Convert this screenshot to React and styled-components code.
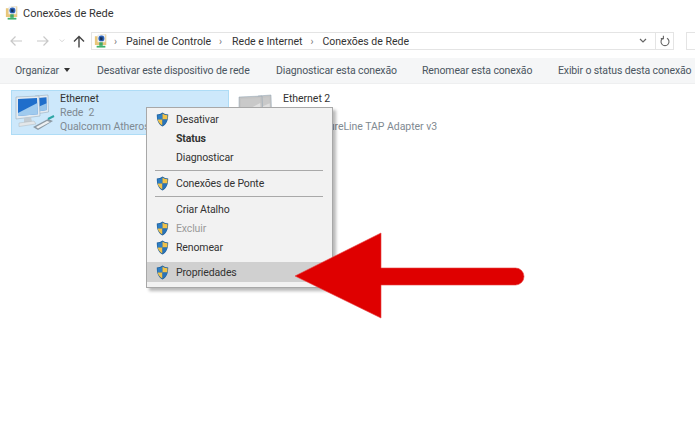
import React from "react";
import styled, { createGlobalStyle } from "styled-components";

const GlobalStyle = createGlobalStyle`
  html, body {
    margin: 0;
    background: #ffffff;
  }
  body {
    font-family: Roboto, "Open Sans", sans-serif;
    font-size: 10.5px;
    letter-spacing: -0.13px;
    color: #3a3a3a;
  }
`;

const Window = styled.div`
  position: relative;
  width: 695px;
  height: 425px;
  overflow: hidden;
  background: #ffffff;
`;

const TitleBar = styled.div`
  display: flex;
  align-items: center;
  gap: 4px;
  height: 26px;
  padding-left: 5px;
  font-size: 11px;
  letter-spacing: 0;
  color: #333;
`;

const NavBar = styled.div`
  display: flex;
  align-items: center;
  height: 30px;
  margin-bottom: 2px;
  padding-left: 9px;
`;

const NavButton = styled.div`
  display: flex;
  flex: none;
  width: ${(p) => p.$w}px;
  color: ${(p) => p.$color};
`;

const AddressBox = styled.div`
  display: flex;
  flex: none;
  align-items: center;
  width: 583px;
  height: 18px;
  box-sizing: border-box;
  border: 1px solid #e4e4e4;
  padding-left: 2px;
  font-size: 10.5px;
  letter-spacing: 0;
  color: #333;
`;

const Crumb = styled.span`
  margin-left: ${(p) => p.$gap}px;
`;

const Chevron = styled.span`
  margin-left: ${(p) => p.$gap}px;
  color: #777;
  font-size: 10px;
`;

const AddressEnd = styled.div`
  margin-left: auto;
  display: flex;
  align-items: center;
  height: 100%;
`;

const RefreshCell = styled.div`
  display: flex;
  align-items: center;
  justify-content: center;
  width: 17px;
  height: 100%;
  border-left: 1px solid #e4e4e4;
`;

const DropCell = styled.div`
  display: flex;
  width: 16px;
`;

const SearchBox = styled.div`
  flex: none;
  width: 30px;
  height: 18px;
  margin-left: 12px;
  box-sizing: border-box;
  border: 1px solid #e4e4e4;
`;

const Toolbar = styled.div`
  display: flex;
  align-items: center;
  height: 25px;
  padding-left: 15px;
  background: #f5f6f7;
  border-bottom: 1px solid #eeeff0;
  color: #4a5560;
`;

const ToolItem = styled.span`
  flex: none;
  white-space: nowrap;
  width: ${(p) => p.$w}px;
`;

const ToolCaret = styled.span`
  display: inline-block;
  margin-left: 5px;
  vertical-align: 2px;
  border-left: 3.5px solid transparent;
  border-right: 3.5px solid transparent;
  border-top: 4px solid #333;
`;

const FileList = styled.div`
  display: flex;
  gap: 5px;
  padding: 6px 0 0 11px;
`;

const Connection = styled.div`
  display: flex;
  align-items: center;
  box-sizing: border-box;
  width: ${(p) => p.$w}px;
  height: 45px;
  padding-left: 3px;
  background: ${(p) => (p.$selected ? "#cde8fb" : "transparent")};
  border: 1px solid ${(p) => (p.$selected ? "#aedcf6" : "transparent")};
`;

const ConnectionText = styled.div`
  display: flex;
  flex-direction: column;
  justify-content: center;
  margin-left: 5px;
  white-space: pre;
  letter-spacing: -0.04px;
  line-height: 14px;
  color: #7f8a92;
`;

const ConnectionName = styled.span`
  color: #333;
`;

const Menu = styled.div`
  position: absolute;
  left: 146px;
  top: 107px;
  box-sizing: border-box;
  width: 187px;
  height: 181px;
  padding-top: 2px;
  background: #f2f2f2;
  border: 1px solid #a8a8a8;
  box-shadow: 3px 3px 3px rgba(0, 0, 0, 0.28);
  color: #333;
`;

const MenuRow = styled.div`
  display: flex;
  align-items: center;
  height: ${(p) => (p.$hover ? 20 : 19)}px;
  margin-top: ${(p) => (p.$hover ? 5 : 0)}px;
  padding-left: 9px;
  background: ${(p) => (p.$hover ? "#d0d0d0" : "transparent")};
  font-weight: ${(p) => (p.$bold ? 700 : 400)};
  color: ${(p) => (p.$disabled ? "#9a9a9a" : "inherit")};
`;

const ShieldSlot = styled.div`
  display: flex;
  width: 20px;
  flex: none;
`;

const MenuSeparator = styled.div`
  height: 1px;
  margin: 3px 9px 3px 8px;
  background: #a9a9a9;
`;

const ArrowOverlay = styled.svg`
  position: absolute;
  left: 290px;
  top: 228px;
`;

const BackArrow = ({ flip }) => (
  <svg width="14" height="12" viewBox="0 0 14 12" fill="none" stroke="currentColor" strokeWidth="1.2"
    style={flip ? { transform: "scaleX(-1)" } : undefined}>
    <path d="M13 6H2M6.500 1.500 2 6l4.500 4.500" />
  </svg>
);

const UpArrow = () => (
  <svg width="12" height="13" viewBox="0 0 12 13" fill="none" stroke="#444" strokeWidth="1.4">
    <path d="M6 12.500V2M1 6.500l5-5 5 5" />
  </svg>
);

const SmallChevron = ({ color = "#777", w = 8 }) => (
  <svg width={w} height="6" viewBox="0 0 8 6" fill="none" stroke={color} strokeWidth="1.2">
    <path d="M1 1l3 3 3-3" />
  </svg>
);

const Refresh = () => (
  <svg width="10" height="12" viewBox="0 0 10 12" fill="none" stroke="#666" strokeWidth="1.1">
    <path d="M3 3.200a4 4 0 1 0 4 0" />
    <path d="M3.400 0.800v2.800H0.800" />
  </svg>
);

const NetFolder = () => (
  <svg width="14" height="16" viewBox="0 0 16 17">
    <path d="M1 3h5l1-2h7v12H1z" fill="#e8c77c" />
    <rect x="4" y="1" width="9" height="9" rx="1" fill="#e9edf4" />
    <circle cx="8.500" cy="5.500" r="3.400" fill="#2a60b4" />
    <path d="M7 4l3 .5-.5 3-2.500-.5z" fill="#172c55" />
    <path d="M3 14h10v2H3z" fill="#3eb06a" />
    <path d="M6 10h4v4H6z" fill="#41a868" />
  </svg>
);

const Shield = () => (
  <svg width="13" height="15" viewBox="0 0 13 15">
    <path d="M6.500.5C5 1.800 3 2.400.8 2.500c0 5 .9 9.300 5.700 12 4.800-2.700 5.700-7 5.700-12C10 2.400 8 1.800 6.500.5z" fill="#1c5f9e" />
    <path d="M6.500 1.500v6H1.700C1.500 6 1.500 4.500 1.500 3.200 3.500 3 5.200 2.500 6.500 1.500z" fill="#2f7fc4" />
    <path d="M6.500 1.500c1.300 1 3 1.500 5 1.700 0 1.400 0 2.900-.2 4.300H6.500z" fill="#f0c24a" />
    <path d="M1.700 7.500h4.800v6.100C3.500 11.700 2.200 10 1.700 7.500z" fill="#f0c24a" />
    <path d="M6.500 7.500h4.800c-.5 2.500-1.800 4.200-4.800 6.100z" fill="#2a73b8" />
  </svg>
);

const ComputersIcon = ({ gray }) => {
  const screen = gray ? "#c9c9c9" : "#1f6ecb";
  const glow = gray ? "#e6e6e6" : "#bfe1f6";
  const frame = gray ? "#c4c4c4" : "#e4ebf1";
  const cable = gray ? "#bdbdbd" : "#8d9aa4";
  return (
    <svg width="40" height="38" viewBox="0 0 40 38">
      <path d="M20 2l13-1 .5 17-13 2z" fill={frame} stroke="#8fa3b2" strokeWidth=".5" />
      <path d="M23 4l8.500-.7.4 12.700-8.900 1.500z" fill={screen} />
      <path d="M31.700 9.300l.2 6.700-8.900 1.500V13z" fill={glow} opacity=".75" />
      <path d="M1 3l23-1 1 20-24 3z" fill={frame} stroke="#8fa3b2" strokeWidth=".5" />
      <path d="M3 5l19-1 .8 16.300L3 22z" fill={screen} />
      <path d="M22.300 9l.5 11.300L3 22v-3z" fill={glow} opacity=".8" />
      <path d="M9 24l7-1 1 5-8 1z" fill="#c3ccd3" />
      <path d="M4 29l15-2 2 3-17 2.500z" fill="#e3e7ea" stroke="#a4adb4" strokeWidth=".4" />
      <path d="M18 33l15-8 5 2-15 9z" fill={cable} />
      <path d="M21 33l11-6 3 1-12 6.500z" fill="#eef1f3" />
      <path d="M33 25l6-3" stroke={gray ? "#bbb" : "#2fa6a6"} strokeWidth="2" />
    </svg>
  );
};

const items = [
  { label: "Desativar", shield: true },
  { label: "Status", bold: true },
  { label: "Diagnosticar" },
  { separator: true },
  { label: "Conexões de Ponte", shield: true },
  { separator: true },
  { label: "Criar Atalho" },
  { label: "Excluir", shield: true, disabled: true },
  { label: "Renomear", shield: true },
  { label: "Propriedades", shield: true, hover: true },
];

function App() {
  return (
    <Window>
      <GlobalStyle />
      <TitleBar>
        <NetFolder />
        Conexões de Rede
      </TitleBar>
      <NavBar>
        <NavButton $w={27} $color="#c8c8c8"><BackArrow /></NavButton>
        <NavButton $w={23} $color="#c8c8c8"><BackArrow flip /></NavButton>
        <NavButton $w={14}><SmallChevron color="#d0d0d0" w={6} /></NavButton>
        <NavButton $w={18}><UpArrow /></NavButton>
        <AddressBox>
          <NetFolder />
          <Chevron $gap={6}>›</Chevron>
          <Crumb $gap={9}>Painel de Controle</Crumb>
          <Chevron $gap={8}>›</Chevron>
          <Crumb $gap={10}>Rede e Internet</Crumb>
          <Chevron $gap={8}>›</Chevron>
          <Crumb $gap={9}>Conexões de Rede</Crumb>
          <AddressEnd>
            <DropCell><SmallChevron color="#666" /></DropCell>
            <RefreshCell><Refresh /></RefreshCell>
          </AddressEnd>
        </AddressBox>
        <SearchBox />
      </NavBar>
      <Toolbar>
        <ToolItem $w={82}>Organizar<ToolCaret /></ToolItem>
        <ToolItem $w={179}>Desativar este dispositivo de rede</ToolItem>
        <ToolItem $w={146}>Diagnosticar esta conexão</ToolItem>
        <ToolItem $w={136}>Renomear esta conexão</ToolItem>
        <ToolItem>Exibir o status desta conexão</ToolItem>
      </Toolbar>
      <FileList>
        <Connection $w={218} $selected>
          <ComputersIcon />
          <ConnectionText>
            <ConnectionName>Ethernet</ConnectionName>
            <span>Rede  2</span>
            <span>Qualcomm Atheros AR8151</span>
          </ConnectionText>
        </Connection>
        <Connection $w={220}>
          <ComputersIcon gray />
          <ConnectionText>
            <ConnectionName>Ethernet 2</ConnectionName>
            <span>Rede 3</span>
            <span>Avast SecureLine TAP Adapter v3</span>
          </ConnectionText>
        </Connection>
      </FileList>
      <Menu>
        {items.map((item, i) =>
          item.separator ? (
            <MenuSeparator key={i} />
          ) : (
            <MenuRow key={i} $bold={item.bold} $disabled={item.disabled} $hover={item.hover}>
              <ShieldSlot>{item.shield && <Shield />}</ShieldSlot>
              {item.label}
            </MenuRow>
          )
        )}
      </Menu>
      <ArrowOverlay width="240" height="96" viewBox="0 0 240 96">
        <path
          d="M5 48 91 5v35h134.500a8.500 8.500 0 0 1 0 17H91v33z"
          fill="#df0000"
          stroke="#e84040"
          strokeWidth=".6"
        />
      </ArrowOverlay>
    </Window>
  );
}

export default App;
